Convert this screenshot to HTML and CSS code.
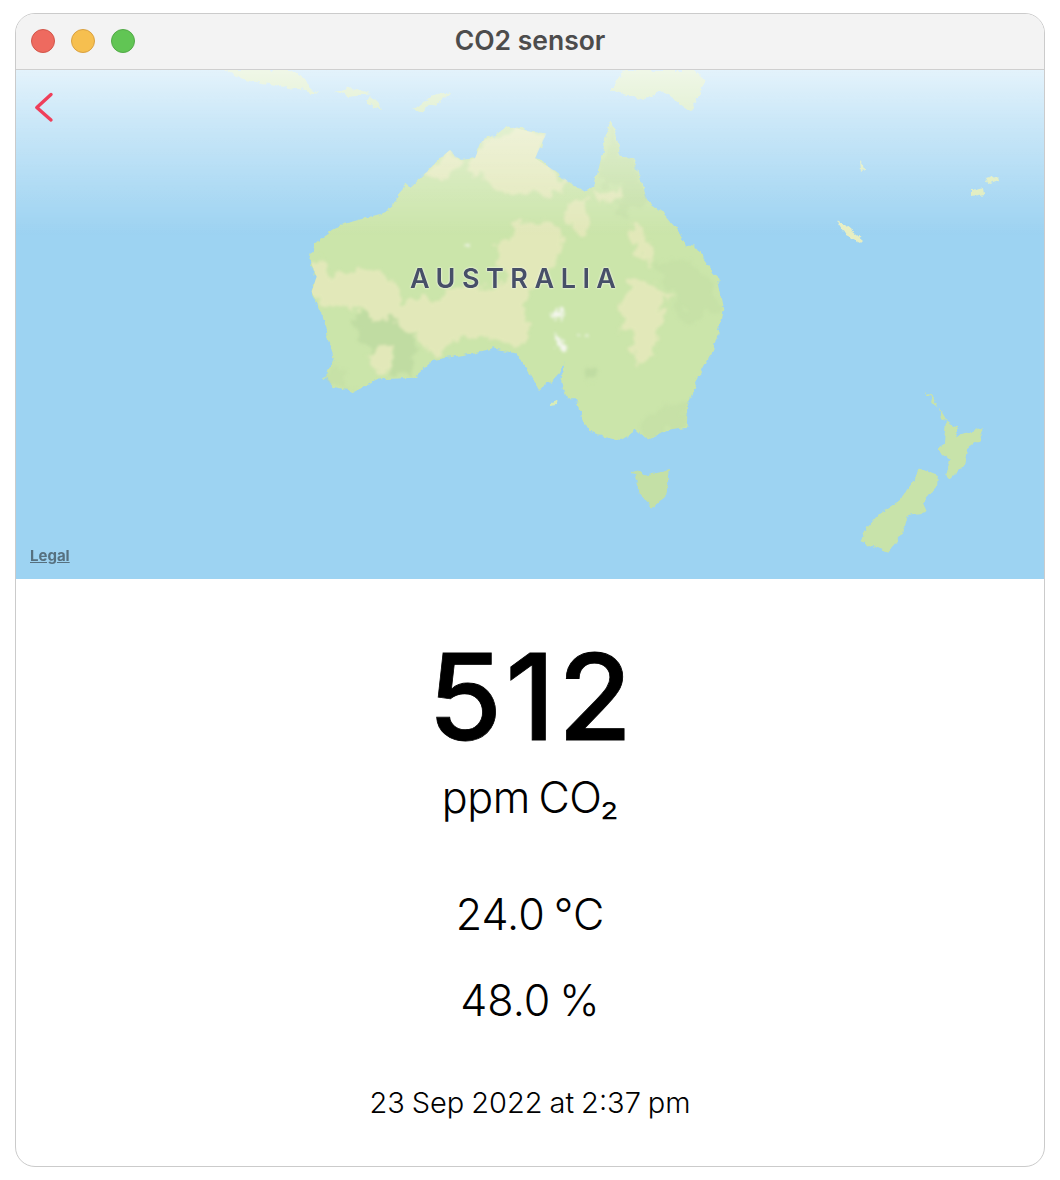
FILE: index.html
```html
<!DOCTYPE html>
<html lang="en">
<head>
<meta charset="utf-8">
<title>CO2 sensor</title>
<link rel="stylesheet" href="styles.css">
</head>
<body>
<main class="window">
  <header class="titlebar">
    <div class="lights">
      <span class="light light-red"></span>
      <span class="light light-yellow"></span>
      <span class="light light-green"></span>
    </div>
    <h1 class="title">CO2 sensor</h1>
  </header>
  <section class="map">
    <svg class="map-art" viewBox="16 70 1028 509" preserveAspectRatio="none" aria-hidden="true">
      <defs>
        <linearGradient id="haze" x1="0" y1="0" x2="0" y2="1">
          <stop offset="0" stop-color="#fff" stop-opacity=".72"/>
          <stop offset=".3" stop-color="#fff" stop-opacity=".48"/>
          <stop offset=".7" stop-color="#fff" stop-opacity=".2"/>
          <stop offset="1" stop-color="#fff" stop-opacity="0"/>
        </linearGradient>
        <filter id="rough" x="-5%" y="-5%" width="110%" height="110%">
          <feTurbulence type="fractalNoise" baseFrequency=".12" numOctaves="3" seed="4" result="n"/>
          <feDisplacementMap in="SourceGraphic" in2="n" scale="7" xChannelSelector="R" yChannelSelector="G"/>
          <feGaussianBlur stdDeviation=".5"/>
        </filter>
        <filter id="soft" x="-5%" y="-5%" width="110%" height="110%">
          <feTurbulence type="fractalNoise" baseFrequency=".07" numOctaves="4" seed="9" result="n"/>
          <feDisplacementMap in="SourceGraphic" in2="n" scale="22" xChannelSelector="R" yChannelSelector="G"/>
          <feGaussianBlur stdDeviation="1.600"/>
        </filter>
        <clipPath id="mainland">
          <path transform="translate(290 70) scale(.3333)" d="M60 570 75 520 100 500 150 465 240 440 295 425 330 370 345 335 365 350 395 320 450 265 480 240 510 270 555 265 575 215 620 190 660 170 720 185 770 190 735 265 790 300 850 345 885 365 915 340 935 260 960 150 985 220 995 260 1030 265 1050 325 1075 400 1125 435 1170 490 1185 525 1215 530 1280 620 1300 720 1270 840 1225 925 1195 1000 1190 1070 1130 1080 1075 1110 1040 1080 990 1110 900 1085 875 1040 860 985 830 985 815 930 820 880 800 920 750 960 715 900 680 850 610 835 520 855 430 870 375 920 270 925 190 965 130 950 105 925 130 860 100 740 65 665 80 620Z"/>
        </clipPath>
      </defs>
      <rect x="16" y="70" width="1028" height="509" fill="#9dd3f2"/>
      <g filter="url(#rough)">
        <g transform="translate(290 70) scale(.3333)" fill="#cbe5aa">
          <path d="M60 570 75 520 100 500 150 465 240 440 295 425 330 370 345 335 365 350 395 320 450 265 480 240 510 270 555 265 575 215 620 190 660 170 720 185 770 190 735 265 790 300 850 345 885 365 915 340 935 260 960 150 985 220 995 260 1030 265 1050 325 1075 400 1125 435 1170 490 1185 525 1215 530 1280 620 1300 720 1270 840 1225 925 1195 1000 1190 1070 1130 1080 1075 1110 1040 1080 990 1110 900 1085 875 1040 860 985 830 985 815 930 820 880 800 920 750 960 715 900 680 850 610 835 520 855 430 870 375 920 270 925 190 965 130 950 105 925 130 860 100 740 65 665 80 620Z"/>
          <path fill="#c4e0a6" d="M1028 1200 1075 1215 1140 1200 1130 1270 1085 1315 1050 1270Z"/>
          <path fill="#d8ecb8" d="M780 1000 805 992 805 1005 780 1008Z"/>
        </g>
      </g>
      <g clip-path="url(#mainland)">
        <g filter="url(#soft)">
          <g transform="translate(290 70) scale(.3333)">
            <g fill="#e2e8b9">
              <path d="M530 300 575 220 660 175 770 190 735 265 820 330 820 370 700 365 620 360 600 320Z"/>
              <path d="M395 320 480 245 510 270 480 310 420 330Z"/>
              <path d="M50 570 100 580 110 620 230 590 290 620 340 690 470 680 480 660 640 640 620 530 690 460 780 445 820 490 790 600 720 670 690 740 725 775 690 830 620 800 520 800 450 860 410 850 390 800 330 770 200 720 100 710 55 670Z"/>
              <path d="M1000 660 1060 625 1140 680 1110 740 1100 800 1090 880 1040 880 1020 840 1040 790 985 770 1000 710Z"/>
              <path d="M820 400 890 385 900 490 870 500 830 450Z"/>
              <path d="M1015 450 1060 470 1085 530 1080 590 1040 550Z"/>
              <path d="M910 370 1000 350 1000 380 930 405Z"/>
            </g>
            <g fill="#c0dca2">
              <path d="M190 735 290 740 385 800 360 880 365 915 310 905 300 840 235 850 200 780Z"/>
              <path d="M880 900 920 890 925 925 895 940Z"/>
              <path d="M1090 580 1170 560 1270 640 1290 720 1200 760 1130 640Z" opacity=".4"/>
              <path d="M930 300 960 150 990 250 1030 270 1060 350 1075 400 1030 420 985 440 970 400 1000 380 990 340 930 340Z" opacity=".5"/>
              <path d="M1040 1070 1130 1000 1190 1000 1185 1070 1130 1080 1075 1110Z" opacity=".4"/>
              <path d="M105 925 150 880 190 965 130 950Z" opacity=".4"/>
            </g>
            <path fill="#e2e8b9" d="M235 860 290 830 305 900 260 915Z"/>
            <g fill="#f4f6ee">
              <path d="M785 710 805 720 808 745 795 738Z"/>
              <path d="M800 800 820 810 820 845 805 835Z"/>
              <path d="M870 800 882 815 868 822Z"/>
              <path d="M520 520 545 516 540 528Z"/>
            </g>
          </g>
        </g>
      </g>
      <g filter="url(#rough)" fill="#c8e3aa">
        <path d="M925 391 931 395 938 404 941 418 951 425 957 426 957 436 983 427 979 440 967 450 964 466 950 480 945 475 950 460 936 448 944 443 946 420 940 410Z"/>
        <path d="M920 468 938 475 937 487 923 503 927 512 908 515 903 533 888 552 875 547 860 541 868 527 878 515 900 500 912 483Z"/>
        <path fill="#e7eec2" d="M835 219 845 225 863 240 860 243 845 235Z"/>
        <path fill="#dcebb8" d="M972 190 983 187 984 195 972 197Z"/>
        <path fill="#dcebb8" d="M985 180 998 176 999 180 987 184Z"/>
        <path fill="#dcebb8" d="M860 161 864 166 865 169 861 170Z"/>
        <path d="M225 70 290 70 300 76 318 94 300 90 275 85 245 80Z"/>
        <path d="M367 100 370 95 380 105 382 111 372 107Z"/>
        <path d="M413 110 430 97 451 92 440 101 420 111Z"/>
        <path d="M335 92 352 88 370 93 350 97Z"/>
        <path d="M625 70 660 70 695 70 705 80 692 112 660 90 645 100 610 90Z"/>
      </g>
      <rect x="16" y="70" width="1028" height="165" fill="url(#haze)"/>
    </svg>
    <button class="back" type="button" aria-label="Back">
      <svg width="24" height="34" viewBox="0 0 24 34" aria-hidden="true"><path d="M18 3.500 3.800 16.500 18 29" fill="none" stroke="#ef3f5a" stroke-width="3.400" stroke-linecap="round" stroke-linejoin="round"/></svg>
    </button>
    <span class="region">AUSTRALIA</span>
    <a class="legal" href="#">Legal</a>
  </section>
  <section class="readings">
    <div class="co2">512</div>
    <div class="unit">ppm CO₂</div>
    <div class="stat stat-temp">24.0 °C</div>
    <div class="stat stat-hum">48.0 %</div>
    <div class="stamp">23 Sep 2022 at 2:37 pm</div>
  </section>
</main>
</body>
</html>
```

FILE: styles.css
```css
* { box-sizing: border-box; }
html, body { margin: 0; background: #fff; }
body {
  padding: 13px 15px;
  font-family: Inter, "Liberation Sans", sans-serif;
  color: #000;
}
.window {
  width: 1030px;
  height: 1154px;
  border: 1px solid #cbcbcb;
  border-radius: 20px;
  overflow: hidden;
  background: #fff;
  display: flex;
  flex-direction: column;
}
.titlebar {
  position: relative;
  height: 56px;
  flex: none;
  padding-bottom: 4px;
  background: #f3f3f3;
  border-bottom: 1px solid #cfcfcf;
  display: flex;
  align-items: center;
  justify-content: center;
}
.lights {
  position: absolute;
  left: 15px;
  top: 15px;
  display: flex;
  gap: 16px;
}
.light {
  width: 24px;
  height: 24px;
  border-radius: 50%;
  border: 1px solid;
}
.light-red { background: #ee6a5f; border-color: #d25549; }
.light-yellow { background: #f6bf4f; border-color: #d9a040; }
.light-green { background: #61c554; border-color: #52a947; }
.title {
  margin: 0;
  font-size: 26.500px;
  line-height: 50px;
  font-weight: 600;
  color: #4c4c4c;
  font-family: Inter, "Liberation Sans", sans-serif;
}
.map {
  position: relative;
  height: 509px;
  flex: none;
  overflow: hidden;
}
.map-art { display: block; width: 100%; height: 100%; }
.back {
  position: absolute;
  left: 17px;
  top: 21px;
  padding: 0;
  border: 0;
  background: none;
  line-height: 0;
}
.region {
  position: absolute;
  left: 394px;
  top: 192px;
  font-size: 27px;
  line-height: 34px;
  font-weight: 600;
  letter-spacing: 6.500px;
  color: #474f68;
  text-shadow: 0 0 2px #f2f5e6, 0 0 2px #f2f5e6;
  white-space: nowrap;
}
.legal {
  position: absolute;
  left: 14px;
  bottom: 15px;
  font-size: 15px;
  line-height: 16px;
  font-weight: 700;
  color: #56707f;
}
.readings {
  flex: 1;
  display: flex;
  flex-direction: column;
  align-items: center;
  text-align: center;
}
.co2 {
  margin-top: 48px;
  margin-right: -3px;
  font-size: 120px;
  line-height: 140px;
  font-weight: 500;
  -webkit-text-stroke: .8px #000;
  letter-spacing: 3px;
}
.unit {
  margin-top: 1px;
  font-size: 43px;
  line-height: 58px;
  font-weight: 300;
  letter-spacing: -.4px;
  word-spacing: -3px;
}
.stat {
  font-size: 43px;
  line-height: 58px;
  font-weight: 300;
  word-spacing: -3px;
}
.stat-temp { margin-top: 59px; }
.stat-hum { margin-top: 28px; }
.stamp {
  margin-top: 54px;
  font-size: 29px;
  line-height: 40px;
  font-weight: 300;
  word-spacing: -1.200px;
}
```
